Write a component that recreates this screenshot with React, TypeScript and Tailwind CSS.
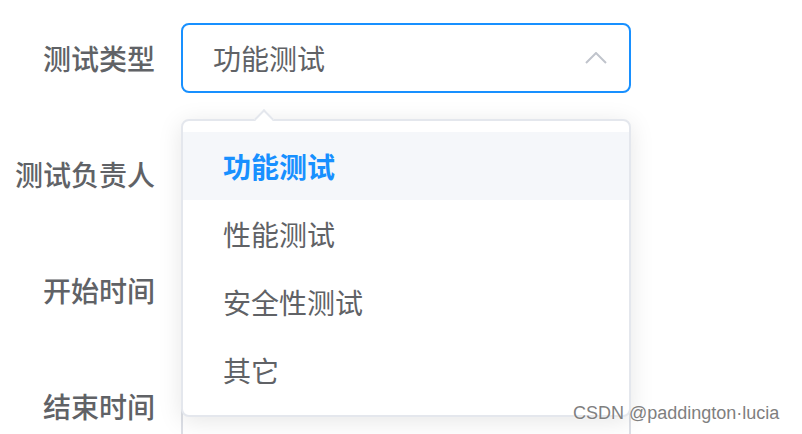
import React from 'react';

const options = ['功能测试', '性能测试', '安全性测试', '其它'];

const Row: React.FC<{ label: string; children: React.ReactNode }> = ({ label, children }) => (
  <div className="flex items-center h-[70px]">
    <div className="w-[181px] pr-[26px] text-right text-[28px] font-medium text-[#606266] leading-none">{label}</div>
    {children}
  </div>
);

const Input: React.FC<{ placeholder?: string }> = ({ placeholder }) => (
  <div className="w-[450px] h-[70px] border-2 border-[#dcdfe6] rounded-lg bg-white flex items-center pl-[40px] pb-[12px] text-[28px] text-[#c8cbd1]">
    {placeholder}
  </div>
);

export default function App() {
  const selected = 0;
  return (
    <div
      className="relative w-[802px] h-[434px] overflow-hidden bg-white"
      style={{ fontFamily: '"Noto Sans CJK SC", "Noto Sans", sans-serif' }}
    >
      <div className="flex flex-col gap-[46px] pt-[23px]">
        <Row label="测试类型">
          <div className="w-[450px] h-[70px] border-2 border-[#1890ff] rounded-lg bg-white flex items-center justify-between pl-[30px] pr-[22px]">
            <span className="text-[28px] text-[#606266]">{options[selected]}</span>
            <svg width="22" height="12" viewBox="0 0 22 12" fill="none">
              <polyline points="1,11 11,1 21,11" stroke="#c0c4cc" strokeWidth="2" />
            </svg>
          </div>
        </Row>
        <Row label="测试负责人">
          <Input />
        </Row>
        <Row label="开始时间">
          <Input />
        </Row>
        <Row label="结束时间">
          <Input placeholder="选择日期" />
        </Row>
      </div>

      {/* dropdown popper */}
      <div className="absolute left-[181px] top-[119px] w-[450px] border-2 border-[#e4e7ed] rounded-lg bg-white shadow-[0_4px_24px_rgba(0,0,0,0.1)] py-[11px]">
        <div className="absolute left-[74px] top-[-9px] w-[14px] h-[14px] bg-white border-l-2 border-t-2 border-[#e4e7ed] rotate-45" />
        {options.map((o, i) => (
          <div
            key={o}
            className={`relative h-[68px] flex items-center px-[40px] text-[28px] ${
              i === selected ? 'bg-[#f5f7fa] text-[#1890ff] font-bold' : 'text-[#606266]'
            }`}
          >
            {o}
          </div>
        ))}
      </div>

      <div
        className="absolute left-[573px] top-[404px] text-[18px] text-[#7f7f7f] leading-none [text-shadow:0_0_2px_#fff]"
        style={{ fontFamily: '"Liberation Sans", Arial, sans-serif' }}
      >
        CSDN @paddington·lucia
      </div>
    </div>
  );
}
